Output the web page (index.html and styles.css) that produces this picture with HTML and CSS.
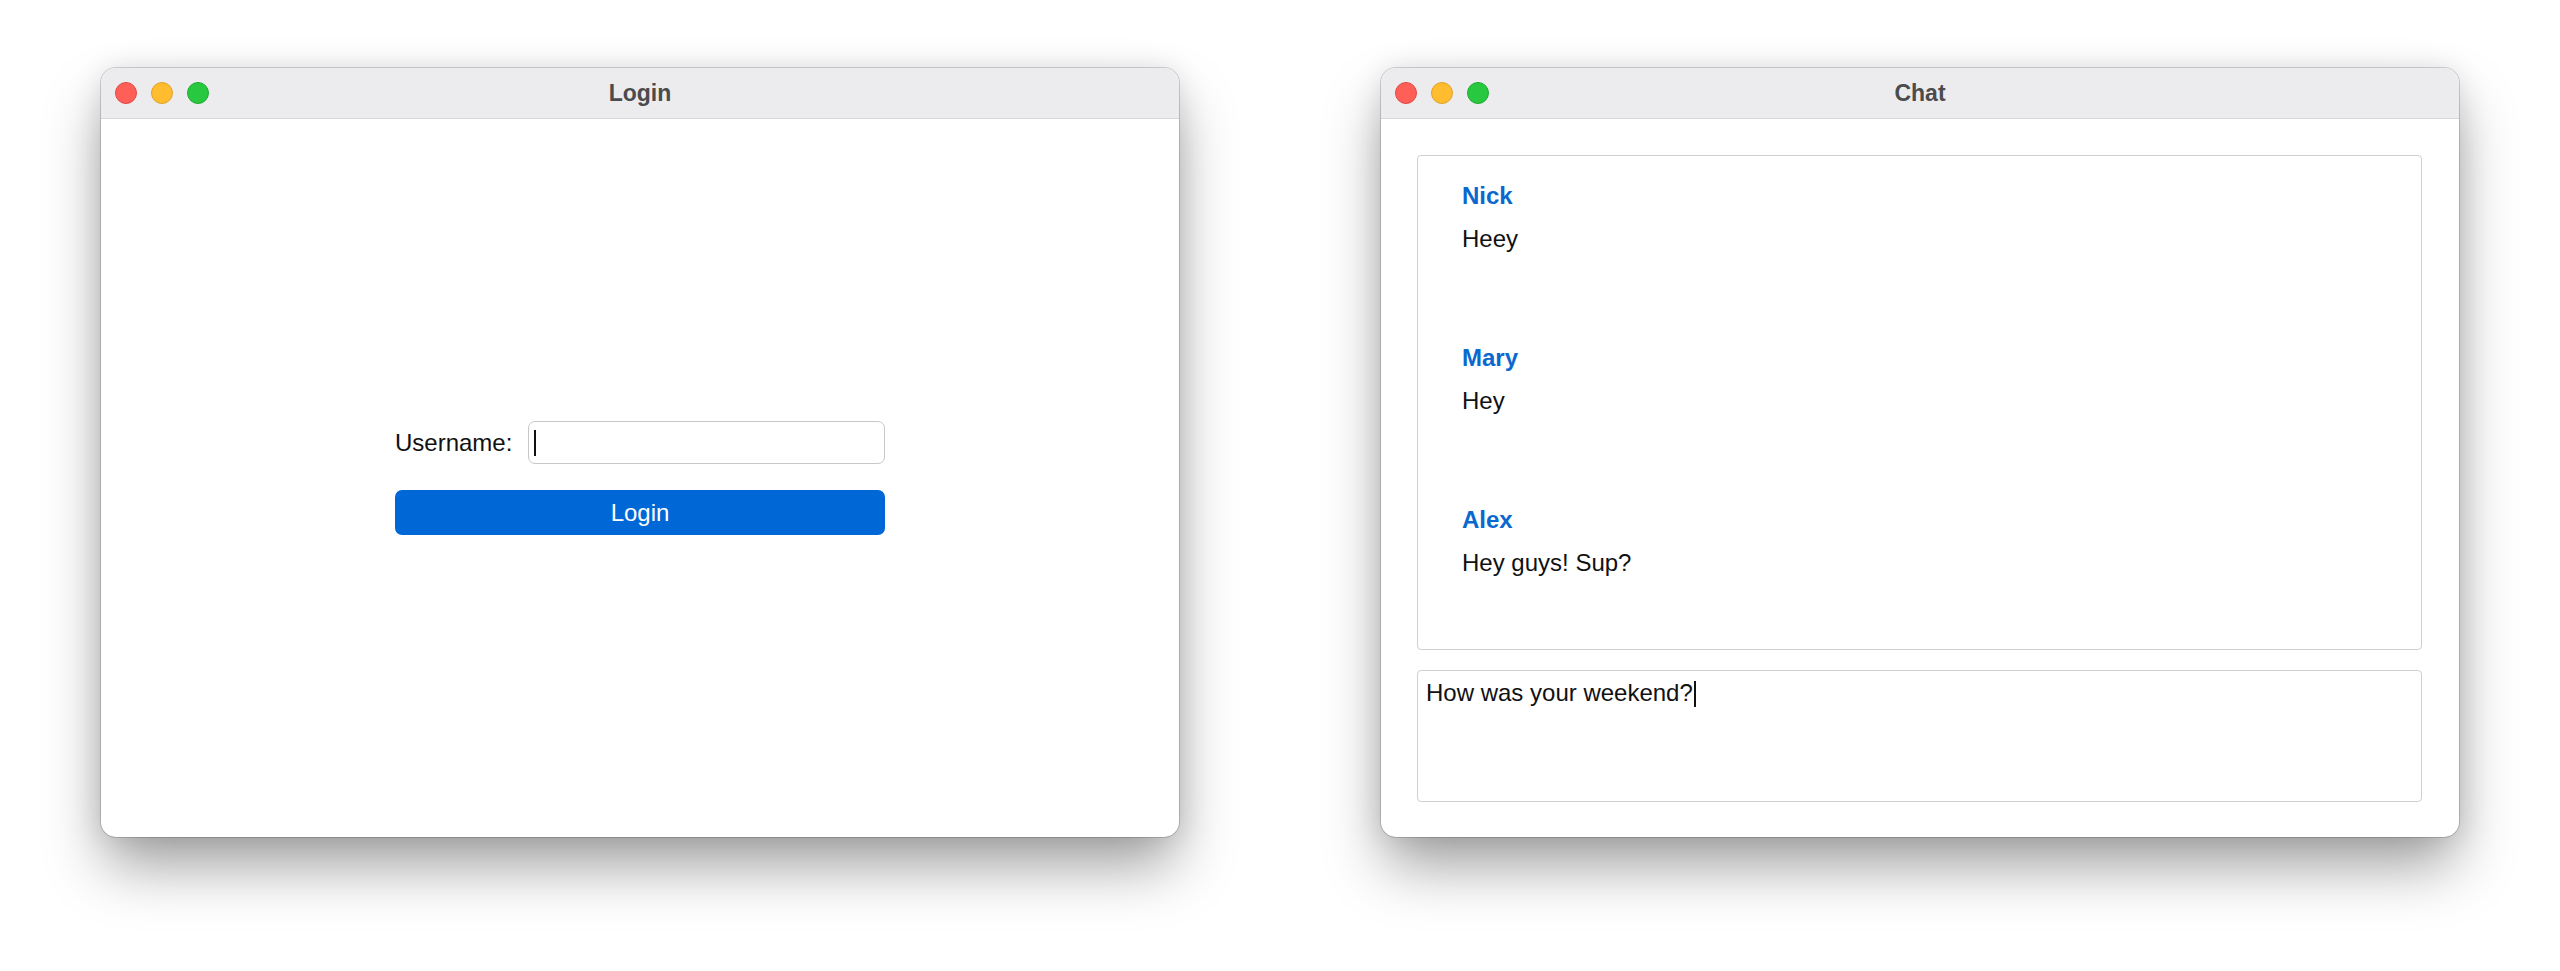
FILE: index.html
```html
<!DOCTYPE html>
<html lang="en">
<head>
  <meta charset="UTF-8" />
  <title>Login / Chat</title>
  <link rel="stylesheet" href="styles.css">
</head>
<body>
  <div class="desktop">

    <!-- Login window -->
    <div class="window">
      <div class="titlebar">
        <div class="lights">
          <span class="light red"></span>
          <span class="light yellow"></span>
          <span class="light green"></span>
        </div>
        <div class="title">Login</div>
      </div>
      <div class="login-content">
        <div class="login-form">
          <div class="field-row">
            <span class="field-label">Username:</span>
            <div class="text-field"><span class="caret"></span></div>
          </div>
          <div class="primary-button">Login</div>
        </div>
      </div>
    </div>

    <!-- Chat window -->
    <div class="window">
      <div class="titlebar">
        <div class="lights">
          <span class="light red"></span>
          <span class="light yellow"></span>
          <span class="light green"></span>
        </div>
        <div class="title">Chat</div>
      </div>
      <div class="chat-content">
        <div class="message-list">
          <div class="message">
            <div class="author">Nick</div>
            <div class="body">Heey</div>
          </div>
          <div class="message">
            <div class="author">Mary</div>
            <div class="body">Hey</div>
          </div>
          <div class="message">
            <div class="author">Alex</div>
            <div class="body">Hey guys! Sup?</div>
          </div>
        </div>
        <div class="compose">How was your weekend?<span class="caret inline"></span></div>
      </div>
    </div>

  </div>
</body>
</html>
```

FILE: styles.css
```css
html, body { height: 100%; }
body {
  margin: 0;
  background: #fff;
  font-family: "Liberation Sans", Arial, sans-serif;
  color: #111;
}
.desktop {
  min-height: 100%;
  box-sizing: border-box;
  display: flex;
  justify-content: center;
  align-items: flex-start;
  gap: 202px;
  padding-top: 68px;
}

/* window chrome */
.window {
  width: 1078px;
  height: 769px;
  display: flex;
  flex-direction: column;
  background: #fff;
  border-radius: 15px;
  overflow: hidden;
  box-shadow: 0 0 0 1px rgba(0, 0, 0, 0.16),
              0 32px 60px -4px rgba(0, 0, 0, 0.38),
              0 0 28px rgba(0, 0, 0, 0.10);
}
.titlebar {
  height: 50px;
  flex: none;
  display: grid;
  grid-template-columns: 1fr auto 1fr;
  align-items: center;
  background: #ececef;
  border-bottom: 1px solid #d9d9dc;
}
.lights { display: flex; gap: 14px; padding-left: 14px; }
.light { width: 22px; height: 22px; border-radius: 50%; box-sizing: border-box; }
.red    { background: #fe5f57; border: 1px solid #e2463f; }
.yellow { background: #febc2e; border: 1px solid #e0a125; }
.green  { background: #28c840; border: 1px solid #1daa2c; }
.title {
  font-size: 23px;
  font-weight: bold;
  color: #4b4b4d;
}

/* login */
.login-content {
  flex: 1;
  display: flex;
  align-items: center;
  justify-content: center;
}
.login-form { width: 490px; display: flex; flex-direction: column; gap: 26px; }
.field-row { display: flex; align-items: center; gap: 16px; }
.field-label { font-size: 24px; color: #111; }
.text-field {
  flex: 1;
  height: 43px;
  box-sizing: border-box;
  border: 1px solid #c8c8c8;
  border-radius: 7px;
  padding-left: 5px;
  display: flex;
  align-items: center;
}
.caret { display: block; width: 2px; height: 26px; background: #111; }
.caret.inline { display: inline-block; height: 26px; vertical-align: -6px; margin-left: 1px; }
.primary-button {
  height: 45px;
  display: flex;
  align-items: center;
  justify-content: center;
  background: #0067d6;
  border-radius: 7px;
  color: #fff;
  font-size: 24px;
}

/* chat */
.chat-content {
  flex: 1;
  display: flex;
  flex-direction: column;
  gap: 20px;
  padding: 36px 37px 35px 36px;
}
.message-list {
  height: 495px;
  box-sizing: border-box;
  border: 1px solid #d0d0d0;
  border-radius: 4px;
  padding: 26px 44px;
}
.message {
  height: 162px;
  display: flex;
  flex-direction: column;
  gap: 15px;
  font-size: 24px;
  line-height: 28px;
}
.author { font-weight: bold; color: #0a68cf; }
.body { color: #111; }
.compose {
  height: 132px;
  box-sizing: border-box;
  border: 1px solid #d0d0d0;
  border-radius: 4px;
  padding: 8px;
  font-size: 24px;
  line-height: 28px;
  color: #111;
}
```
